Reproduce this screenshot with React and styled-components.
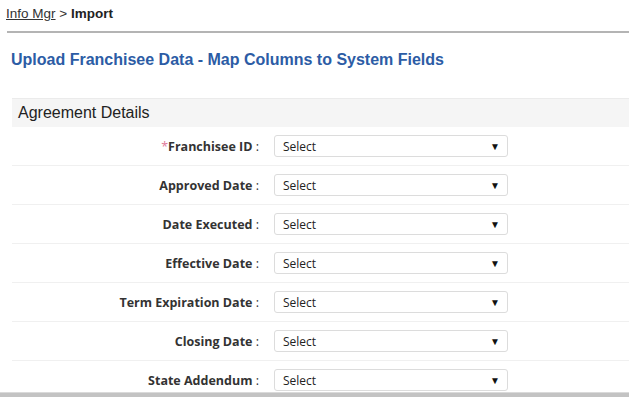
import styled, { createGlobalStyle } from "styled-components";

const GlobalStyle = createGlobalStyle`
  html, body {
    margin: 0;
    padding: 0;
    background: #fff;
  }
  body {
    font-family: Arial, "Liberation Sans", sans-serif;
    color: #333;
  }
`;

const Page = styled.div`
  height: 397px;
  display: flex;
  flex-direction: column;
  overflow: hidden;
`;

const Content = styled.div`
  flex: 1;
  overflow: hidden;
`;

const Breadcrumb = styled.div`
  margin-left: 7px;
  padding-top: 6px;
  height: 25px;
  font-size: 13.5px;
  line-height: 15px;
  color: #333;
  border-bottom: 2px solid #b4b4b4;

  a {
    color: #333;
    text-decoration: underline;
    margin-left: -1px;
  }

  strong {
    color: #222;
  }
`;

const Title = styled.h1`
  margin: 17px 0 0 11px;
  font-size: 16px;
  line-height: 20px;
  font-weight: bold;
  color: #2c5ca5;
`;

const Section = styled.div`
  margin: 28px 0 0 12px;
`;

const SectionHeader = styled.div`
  height: 28px;
  background: #f5f5f5;
  border-top: 1px solid #ebebeb;
  padding-left: 6px;
  font-size: 16px;
  line-height: 28px;
  color: #222;
`;

const Row = styled.div`
  display: grid;
  grid-template-columns: 254px 1fr;
  height: 38px;
  border-bottom: 1px solid #f0f0f0;
  align-items: center;
`;

const Label = styled.div`
  text-align: right;
  padding-right: 7px;
  font-family: "Open Sans", Tahoma, sans-serif;
  font-size: 12.5px;
  font-weight: bold;
  color: #333;

  span.colon {
    font-weight: normal;
  }
`;

const Required = styled.span`
  color: #e07a9a;
  font-weight: normal;
`;

const SelectBox = styled.div`
  margin-left: 8px;
  width: 234px;
  height: 22px;
  box-sizing: border-box;
  border: 1px solid #dcdcdc;
  border-radius: 3px;
  display: flex;
  align-items: center;
  justify-content: space-between;
  padding: 0 7px 0 8px;
  font-family: "Open Sans", Tahoma, sans-serif;
  font-size: 12px;
  color: #222;
  background: #fff;
`;

const Arrow = styled.span`
  font-size: 10px;
  line-height: 10px;
  color: #111;
`;

const BottomBar = styled.div`
  height: 4px;
  background: #c3c3c3;
  border-top: 1px solid #dadada;
`;

const fields = [
  { name: "Franchisee ID", required: true },
  { name: "Approved Date" },
  { name: "Date Executed" },
  { name: "Effective Date" },
  { name: "Term Expiration Date" },
  { name: "Closing Date" },
  { name: "State Addendum" },
];

export default function App() {
  return (
    <Page>
      <GlobalStyle />
      <Content>
        <Breadcrumb>
          <a href="#">Info Mgr</a> &gt; <strong>Import</strong>
        </Breadcrumb>
        <Title>Upload Franchisee Data - Map Columns to System Fields</Title>
        <Section>
          <SectionHeader>Agreement Details</SectionHeader>
          {fields.map((f) => (
            <Row key={f.name}>
              <Label>
                {f.required && <Required>*</Required>}
                {f.name} <span className="colon">:</span>
              </Label>
              <SelectBox>
                <span>Select</span>
                <Arrow>▼</Arrow>
              </SelectBox>
            </Row>
          ))}
        </Section>
      </Content>
      <BottomBar />
    </Page>
  );
}
